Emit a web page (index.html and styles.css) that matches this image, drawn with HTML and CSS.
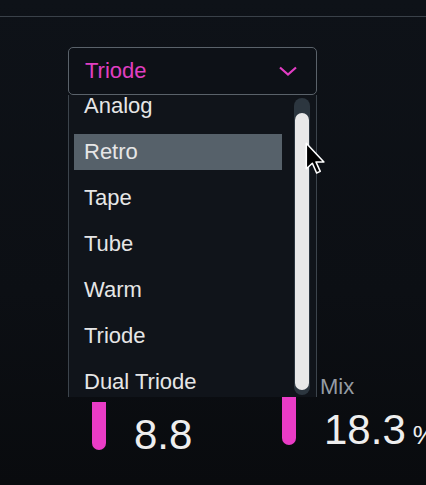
FILE: index.html
```html
<!DOCTYPE html>
<html lang="en">
<head>
    <meta charset="UTF-8">
    <meta name="viewport" content="width=device-width, initial-scale=1.0">
    <title>Saturation - Preset</title>
    <link rel="stylesheet" href="styles.css">
</head>
<body>
    <div class="topbar"></div>

    <div class="preset">
        <div class="select">
            <button class="select-btn">
                <span>Triode</span>
                <svg class="chevron" width="18" height="10" viewBox="0 0 18 10">
                    <path d="M1 1.5 L9 8.5 L17 1.5" fill="none" stroke="#e23dc4" stroke-width="2.2"/>
                </svg>
            </button>

            <!-- open dropdown list -->
            <div class="menu">
                <ul class="menu-list">
                    <li class="menu-item">Analog</li>
                    <li class="menu-item hover">Retro</li>
                    <li class="menu-item">Tape</li>
                    <li class="menu-item">Tube</li>
                    <li class="menu-item">Warm</li>
                    <li class="menu-item">Triode</li>
                    <li class="menu-item">Dual Triode</li>
                </ul>
                <div class="scrollbar"><div class="thumb"></div></div>
            </div>
        </div>
    </div>

    <div class="params">
        <div class="param first">
            <div class="param-row">
                <div class="bar"></div>
                <div class="value">8.8</div>
            </div>
        </div>
        <div class="param">
            <div class="param-label">Mix</div>
            <div class="param-row">
                <div class="bar"></div>
                <div class="value">18.3<span class="unit">%</span></div>
            </div>
        </div>
    </div>

    <svg class="cursor" width="22" height="34" viewBox="0 0 18 28">
        <path d="M1 1 L1 22 L6 17.5 L9.5 25.5 L12.5 24.2 L9 16.5 L15.5 16.5 Z" fill="#000" stroke="#fff" stroke-width="1.3" stroke-linejoin="round"/>
    </svg>
</body>
</html>
```

FILE: styles.css
```css
* {
    margin: 0;
    padding: 0;
    box-sizing: border-box;
}

body {
    width: 426px;
    height: 485px;
    overflow: hidden;
    position: relative;
    font-family: 'Liberation Sans', Arial, sans-serif;
    background: linear-gradient(180deg, #0e1218 0%, #0c0f14 60%, #090b0e 100%);
    color: #e8e8e8;
}

.topbar {
    height: 17px;
    border-bottom: 1px solid #3a4149;
}

.preset {
    padding-top: 30px;
}

.select {
    position: relative;
    margin-left: 68px;
    width: 249px;
}

.select-btn {
    width: 249px;
    height: 48px;
    display: flex;
    align-items: center;
    justify-content: space-between;
    padding: 0 19px 0 16px;
    background: #0d1117;
    border: 1px solid #5a626a;
    border-radius: 5px;
    font-family: inherit;
    font-size: 22px;
    line-height: 46px;
    color: #e03fc2;
    text-align: left;
}

/* the list that hangs under the button */
.menu {
    position: absolute;
    top: 48px;
    left: 0;
    width: 249px;
    height: 302px;
    background: #10141a;
    border-left: 1px solid #3c444c;
    border-right: 1px solid #3c444c;
    overflow: hidden;
    z-index: 5;
}

.menu-list {
    list-style: none;
    margin-top: -12px;
}

.menu-item {
    width: 208px;
    height: 36px;
    margin: 5px 0 10px 5px;
    padding-left: 10px;
    font-size: 22px;
    line-height: 36px;
    color: #e6e6e6;
}

.menu-item.hover {
    background: #56616a;
}

.scrollbar {
    position: absolute;
    top: 3px;
    bottom: 2px;
    left: 225px;
    width: 16px;
    background: #2c363f;
    border-radius: 8px;
}

.thumb {
    margin: 15px 1px 0;
    height: 277px;
    background: #e8e8e8;
    border-radius: 7px;
}

.params {
    display: flex;
    align-items: flex-end;
    margin-top: 281px;
    padding-left: 92px;
}

.param {
    flex-shrink: 0;
}

.param.first {
    width: 190px;
}

.param-label {
    margin-left: 38px;
    font-size: 22px;
    line-height: 21px;
    color: #959ca4;
}

.param-row {
    display: flex;
    gap: 28px;
}

.bar {
    width: 14px;
    height: 48px;
    background: #ea3cc6;
    border-radius: 0 0 7px 7px;
}

.value {
    margin-top: 12px;
    font-size: 42px;
    line-height: 42px;
    color: #eeeeee;
    white-space: nowrap;
}

.unit {
    margin-left: 7px;
    font-size: 26px;
}

.cursor {
    position: absolute;
    left: 305px;
    top: 142px;
    z-index: 10;
}
```
